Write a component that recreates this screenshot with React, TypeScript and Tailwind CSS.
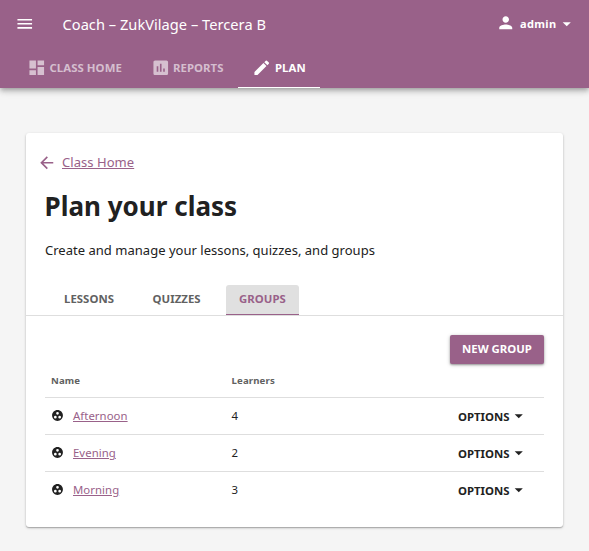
import React from 'react';
import {
  MdArrowBack,
  MdArrowDropDown,
  MdAssessment,
  MdDashboard,
  MdEdit,
  MdGroupWork,
  MdMenu,
  MdPerson,
} from 'react-icons/md';

type Group = { name: string; learners: number };

const groups: Group[] = [
  { name: 'Afternoon', learners: 4 },
  { name: 'Evening', learners: 2 },
  { name: 'Morning', learners: 3 },
];

function TopBar() {
  return (
    <header className="h-[88px] bg-[#996189] text-white shadow-[0_2px_4px_-1px_rgba(0,0,0,0.2),0_4px_5px_rgba(0,0,0,0.14),0_1px_10px_rgba(0,0,0,0.12)]">
      <div className="flex h-12 items-center pl-[15px] pr-[13px]">
        <MdMenu className="size-[19.5px] shrink-0" />
        <h1 className="ml-[28px] whitespace-nowrap text-[14.625px] leading-5 tracking-[0.03px]">
          Coach – ZukVilage – Tercera B
        </h1>
        <button className="ml-auto flex items-center text-[11px] font-bold tracking-[0.35px]">
          <MdPerson className="-mt-[3px] size-[19.5px]" />
          <span className="ml-[5px]">admin</span>
          <MdArrowDropDown className="size-[19.5px]" />
        </button>
      </div>
      <nav className="flex h-10 pl-[14px] text-[11.375px] font-bold tracking-[0.06px]">
        <a className="flex h-10 w-[124px] items-center pl-[12.5px] text-white/60">
          <MdDashboard className="size-[19.5px]" />
          <span className="ml-[3.5px]">CLASS HOME</span>
        </a>
        <a className="flex h-10 w-[100px] items-center pl-[12.5px] text-white/60">
          <MdAssessment className="size-[19.5px]" />
          <span className="ml-[3px]">REPORTS</span>
        </a>
        <a className="flex h-10 w-[82px] items-center border-b border-white pl-[14px] pt-px">
          <MdEdit className="size-[19.5px]" />
          <span className="ml-[3.5px]">PLAN</span>
        </a>
      </nav>
    </header>
  );
}

function GroupRow({ group }: { group: Group }) {
  return (
    <div className="flex h-[37px] items-center border-t border-[#dedede] pl-[6px] text-[11.375px] text-[#212121]">
      <MdGroupWork className="-mt-px size-[13px]" />
      <a className="ml-[9px] w-[158.5px] tracking-[0.05px] text-[#996189] underline">{group.name}</a>
      <span>{group.learners}</span>
      <button className="ml-auto mr-4 flex items-center pt-[2px] font-bold">
        OPTIONS
        <MdArrowDropDown className="-ml-px -mt-[3px] size-[19.5px]" />
      </button>
    </div>
  );
}

export default function App() {
  return (
    <div className="h-[551px] overflow-hidden bg-[#f5f5f5] font-['Noto_Sans',sans-serif] text-[#212121]">
      <TopBar />
      <main className="mx-[26px] mt-[45px] h-[394px] rounded-[3px] bg-white shadow-[0_1px_1px_rgba(0,0,0,0.2),0_1px_3px_rgba(0,0,0,0.2)]">
        <div className="flex h-[59px] items-center pl-[10.5px] text-[13px] text-[#996189]">
          <MdArrowBack className="size-[19.5px]" />
          <a className="ml-[6px] tracking-[0.05px] underline">Class Home</a>
        </div>
        <h2 className="-mt-[2px] pl-[18.5px] text-[26px] font-bold leading-8 tracking-[0.02px]">Plan your class</h2>
        <p className="mt-[18px] pl-[19px] text-[13px] leading-5 tracking-[0.02px]">
          Create and manage your lessons, quizzes, and groups
        </p>
        <div className="mt-[25px] flex h-[31px] border-b border-[#dedede] pl-[25px] text-[11.375px] font-bold tracking-[0.05px] text-[#616161]">
          <div className="flex w-[88px] items-center pb-[2px] pl-[13px]">LESSONS</div>
          <div className="flex w-[87px] items-center pb-[2px] pl-[13.5px]">QUIZZES</div>
          <div className="flex w-[73px] items-center justify-center rounded-t-[3px] border-b border-[#996189] bg-[#e0e0e0] pb-px text-[#996189]">
            GROUPS
          </div>
        </div>
        <section className="px-[19px] pt-[19px]">
          <button className="ml-auto flex h-[29px] w-[94px] items-center justify-center rounded-[2px] bg-[#996189] pb-px text-[11.375px] font-bold text-white shadow-[0_1px_2px_rgba(0,0,0,0.3),0_1px_4px_rgba(0,0,0,0.2)]">
            NEW GROUP
          </button>
          <div className="flex h-[33px] items-center pl-[6px] pt-[2px] text-[9.6px] font-bold tracking-[0.15px] text-[#616161]">
            <span className="w-[180.5px]">Name</span>
            <span>Learners</span>
          </div>
          {groups.map((group) => (
            <GroupRow key={group.name} group={group} />
          ))}
        </section>
      </main>
    </div>
  );
}
